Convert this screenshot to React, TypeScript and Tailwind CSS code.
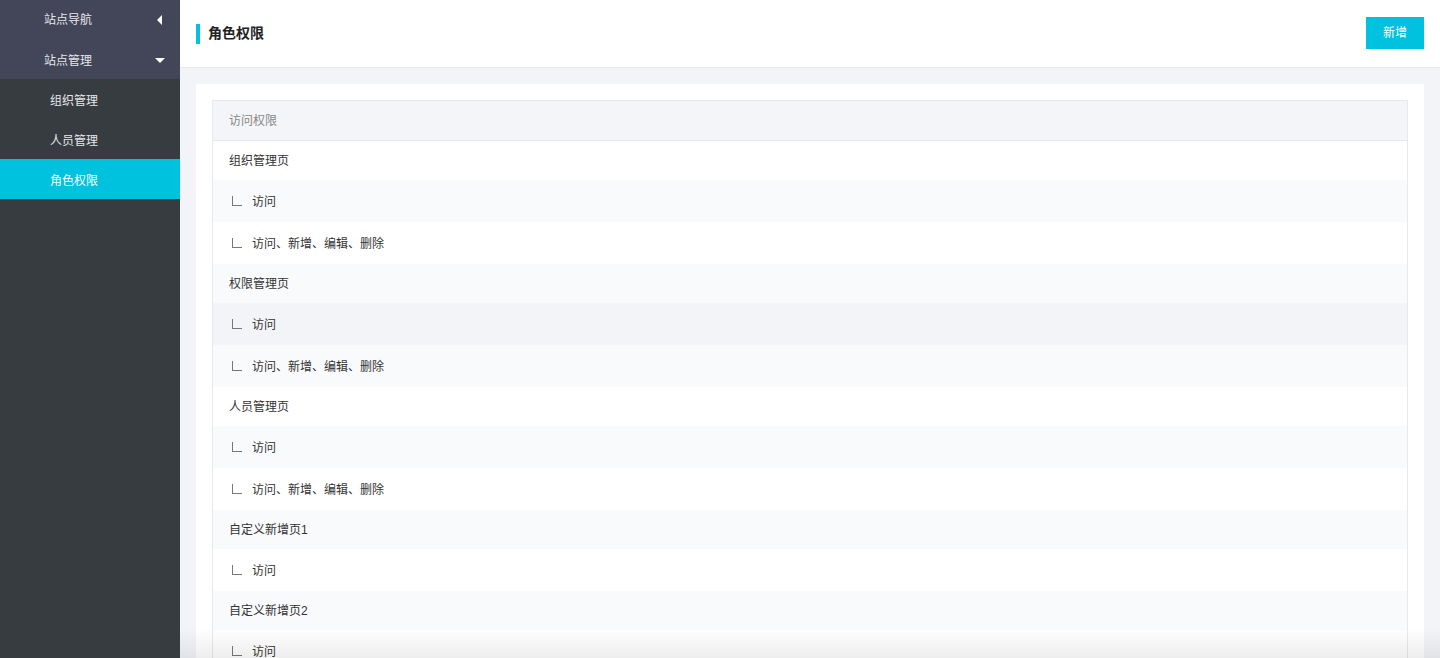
import React from 'react';

type Row = { label: string; child?: boolean };

const rows: Row[] = [
  { label: '组织管理页' },
  { label: '访问', child: true },
  { label: '访问、新增、编辑、删除', child: true },
  { label: '权限管理页' },
  { label: '访问', child: true },
  { label: '访问、新增、编辑、删除', child: true },
  { label: '人员管理页' },
  { label: '访问', child: true },
  { label: '访问、新增、编辑、删除', child: true },
  { label: '自定义新增页1' },
  { label: '访问', child: true },
  { label: '自定义新增页2' },
  { label: '访问', child: true },
];

const subMenu = ['组织管理', '人员管理', '角色权限'];

export default function App() {
  return (
    <div
      className="flex h-screen w-full overflow-hidden text-[12px] text-[#333]"
      style={{ fontFamily: '"Liberation Sans", "Noto Sans CJK SC", sans-serif' }}
    >
      {/* Sidebar */}
      <aside className="flex w-[180px] shrink-0 flex-col bg-[#363c40]">
        <div className="bg-[#434659]">
          <div className="flex h-[40px] items-center justify-between pl-[44px] pr-[18px] text-[#e6e7ea]">
            <span>站点导航</span>
            <span className="h-0 w-0 border-y-[5px] border-r-[5px] border-y-transparent border-r-white" />
          </div>
          <div className="flex h-[39px] items-center justify-between pl-[44px] pr-[15px] pt-[2px] text-[#e6e7ea]">
            <span>站点管理</span>
            <span className="h-0 w-0 border-x-[5px] border-t-[5px] border-x-transparent border-t-white" />
          </div>
        </div>
        {subMenu.map((m) => (
          <div
            key={m}
            className={`flex h-[40px] items-center pl-[50px] pt-[4px] ${
              m === '角色权限' ? 'bg-[#00c1de] text-white' : 'text-[#e6e7ea]'
            }`}
          >
            {m}
          </div>
        ))}
      </aside>

      {/* Main */}
      <main className="relative flex min-w-0 flex-1 flex-col bg-[#f3f4f8]">
        <header className="flex h-[68px] shrink-0 items-center justify-between border-b border-[#e8eaee] bg-white pl-4 pr-4">
          <div className="flex items-center">
            <span className="h-[20px] w-[4px] bg-[#00c1de]" />
            <h1 className="ml-2 text-[14px] font-bold text-[#222]">角色权限</h1>
          </div>
          <button className="mb-[2px] h-[32px] w-[58px] bg-[#00c1de] text-[12px] text-white">新增</button>
        </header>

        <div className="flex-1 px-4 pt-4">
          <div className="bg-white p-4">
            <div className="border border-[#e8e9ec]">
              <div className="flex h-[40px] items-center border-b border-[#e8e9ec] bg-[#f4f5f8] pl-4 text-[#888]">
                访问权限
              </div>
              {rows.map((r, i) => (
                <div
                  key={i}
                  className={`flex items-center pl-4 ${r.child ? 'h-[42px] pt-[2px]' : 'h-[39px]'} ${
                    i === 4 ? 'bg-[#f3f4f8]' : i % 2 === 1 ? 'bg-[#f9fafc]' : 'bg-white'
                  }`}
                >
                  {r.child && (
                    <span className="ml-[3px] mr-[10px] mb-[3px] h-[10px] w-[10px] border-b border-l border-[#777]" />
                  )}
                  <span className="text-[#333]">{r.label}</span>
                </div>
              ))}
            </div>
          </div>
        </div>

        <div className="pointer-events-none absolute bottom-0 left-0 right-0 h-[30px] bg-gradient-to-b from-transparent to-black/[0.07]" />
      </main>
    </div>
  );
}
